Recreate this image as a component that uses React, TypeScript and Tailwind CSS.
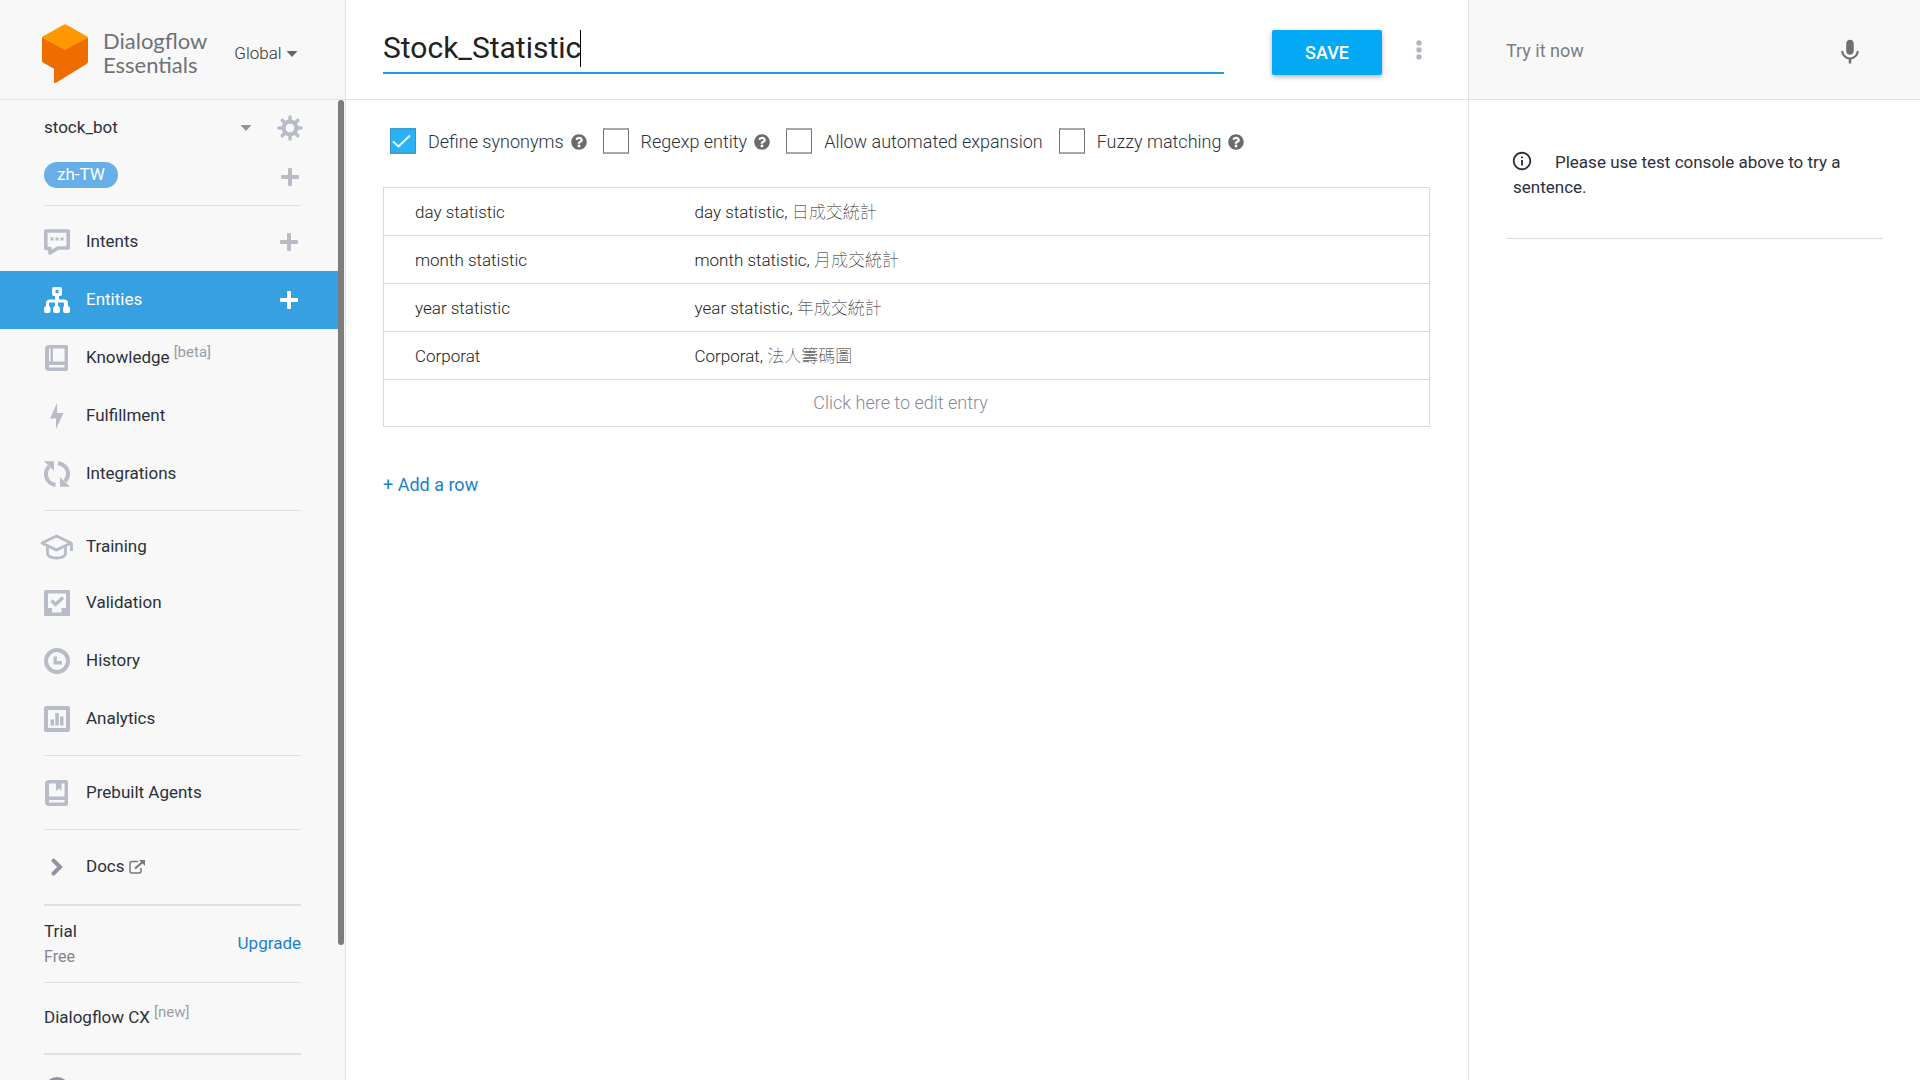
import type { ReactNode } from 'react';
import { FaQuestionCircle } from 'react-icons/fa';
import { MdInfoOutline, MdKeyboardVoice } from 'react-icons/md';

const Logo = () => (
  <svg width="46" height="60" viewBox="0 0 46 60" aria-hidden="true">
    <path d="M23 25.500 0.500 13.500Q0 14 0 15V36.500Q0 38 1.300 38.700L12 44.800V57.500Q12 59.800 14 58.700L44.500 40Q46 39 46 37.500V15Q46 14 45.500 13.500Z" fill="#ef6c00" />
    <path d="M21.600 0.700 0.700 12.600Q-0.300 13.500 0.700 14.100L21.600 25.200Q23 26 24.400 25.200L45.300 14.100Q46.300 13.500 45.300 12.600L24.400 0.700Q23 0 21.600 0.700Z" fill="#ff9800" />
  </svg>
);

const Icon = ({ children, w = 26, h = 26 }: { children: ReactNode; w?: number; h?: number }) => (
  <svg width={w} height={h} viewBox={`0 0 ${w} ${h}`} fill="none" aria-hidden="true">
    {children}
  </svg>
);

const Plus = () => (
  <svg width="18" height="18" viewBox="0 0 18 18" fill="currentColor" aria-hidden="true">
    <rect x="7" y="0" width="4" height="18" rx="1" />
    <rect x="0" y="7" width="18" height="4" rx="1" />
  </svg>
);

const Caret = () => (
  <svg width="12" height="6" viewBox="0 0 12 6" fill="currentColor" aria-hidden="true">
    <path d="M0.500 0h11L6 6Z" />
  </svg>
);

const Gear = () => (
  <svg width="26" height="26" viewBox="0 0 26 26" fill="none" stroke="currentColor" aria-hidden="true">
    <circle cx="13" cy="13" r="6.500" strokeWidth="4" />
    <path
      d="M13 2v5M13 19v5M2 13h5M19 13h5M5.200 5.200l3.500 3.500M17.300 17.300l3.500 3.500M20.800 5.200l-3.500 3.500M8.700 17.300l-3.500 3.500"
      strokeWidth="3.400"
      strokeLinecap="round"
    />
  </svg>
);

const icons = {
  intents: (
    <Icon>
      <path d="M1.800 2H24.200V19H14L6 24V19.500H1.800Z" stroke="currentColor" strokeWidth="3.600" strokeLinejoin="round" />
      <path d="M6.500 8.500h3v3h-3zM11.500 8.500h3v3h-3zM16.500 8.500h3v3h-3z" fill="currentColor" />
    </Icon>
  ),
  entities: (
    <Icon>
      <path
        fillRule="evenodd"
        d="M10 0h6q2 0 2 2v5q0 2-2 2h-1v3.500h5q4 0 4 4V19q2 .5 2 2.500v2.500q0 2-2 2h-3q-2 0-2-2v-2.500q0-2 1-2.500v-2.500q0-1-1-1h-5V19q2 .5 2 2.500v2.500q0 2-2 2h-3q-2 0-2-2v-2.500q0-2 2-2.500v-3.500H6q-1 0-1 1V19q1.500.5 1.500 2.500v2.500q0 2-2 2H2q-2 0-2-2v-2.500q0-2 2-2.500v-2.500q0-4 4-4h5V9h-1Q8 9 8 7V2q0-2 2-2Zm1.500 3v3.200h3V3Z"
        fill="currentColor"
      />
    </Icon>
  ),
  knowledge: (
    <Icon>
      <path fillRule="evenodd" d="M5 0h17q2 0 2 2v22q0 2-2 2H5q-4 0-4-4V4q0-4 4-4Zm0 3.500V16.500h1.500V3.500ZM9 3.500V16.500H20.500V3.500ZM5 20V22.500H20.500V20Z" fill="currentColor" />
    </Icon>
  ),
  fulfillment: (
    <Icon>
      <path d="M13 0 6 15.500h6V26l7.500-16H13Z" fill="currentColor" />
    </Icon>
  ),
  integrations: (
    <Icon>
      <path d="M5 5.500C-.5 11.500 1.500 22 11.500 24M14 2.200C24.500 4 26.500 14 21 20.500" stroke="currentColor" strokeWidth="4" />
      <path d="M0 .3h10v9.400zM26 25.700H16v-9.400z" fill="currentColor" />
    </Icon>
  ),
  training: (
    <Icon w={33}>
      <path d="M2 9 16.500 2 31 9 16.500 16ZM7.500 12V20Q9 24 16.500 24T25.500 20V12M31.500 9V17" stroke="currentColor" strokeWidth="2.800" strokeLinejoin="round" />
    </Icon>
  ),
  validation: (
    <Icon>
      <path fillRule="evenodd" d="M1.500 0h23Q26 0 26 1.500v23Q26 26 24.500 26h-23Q0 26 0 24.500v-23Q0 0 1.500 0ZM4 3.500V18H8V22.500H17.500V18H22V3.500Z" fill="currentColor" />
      <path d="m7.500 10.500 4 4L19 7.500" stroke="currentColor" strokeWidth="3.400" />
    </Icon>
  ),
  history: (
    <Icon>
      <circle cx="13" cy="13" r="11" stroke="currentColor" strokeWidth="4" />
      <path d="M11.200 8.500V14.800H18" stroke="currentColor" strokeWidth="3.400" />
    </Icon>
  ),
  analytics: (
    <Icon>
      <rect x="2" y="2" width="22" height="22" stroke="currentColor" strokeWidth="4" strokeLinejoin="round" />
      <path d="M6.500 13.500h3.500v6H6.500zM11.300 7h3.500v12.500h-3.500zM16 10.500h3.500v9H16z" fill="currentColor" />
    </Icon>
  ),
  prebuilt: (
    <Icon>
      <path fillRule="evenodd" d="M5 0h17q2 0 2 2v22q0 2-2 2H5q-4 0-4-4V4q0-4 4-4Zm0 3.500V16.500H20.500V3.500H17.500V11L15 8.500 12 11V3.500ZM5 20V22.500H20.500V20Z" fill="currentColor" />
    </Icon>
  ),
  docs: (
    <Icon>
      <path d="m9.500 6.500 6.500 6.500-6.500 6.500" stroke="#9094a3" strokeWidth="4" strokeLinecap="round" />
    </Icon>
  ),
};

type Item = { icon: keyof typeof icons; label: string; tag?: string; plus?: boolean; active?: boolean; external?: boolean };

const groups: Item[][] = [
  [
    { icon: 'intents', label: 'Intents', plus: true },
    { icon: 'entities', label: 'Entities', plus: true, active: true },
    { icon: 'knowledge', label: 'Knowledge', tag: '[beta]' },
    { icon: 'fulfillment', label: 'Fulfillment' },
    { icon: 'integrations', label: 'Integrations' },
  ],
  [
    { icon: 'training', label: 'Training' },
    { icon: 'validation', label: 'Validation' },
    { icon: 'history', label: 'History' },
    { icon: 'analytics', label: 'Analytics' },
  ],
  [{ icon: 'prebuilt', label: 'Prebuilt Agents' }],
  [{ icon: 'docs', label: 'Docs', external: true }],
];

const NavItem = ({ item }: { item: Item }) => (
  <li className={`flex items-center pr-[40px] ${item.icon === 'training' ? 'h-[55px]' : 'h-[58px]'} ${item.active ? 'bg-[#36a0e1] text-white' : ''}`}>
    <a href="#" className="flex flex-1 items-center pl-[40px]">
      <span className={`flex w-[33px] justify-center ${item.active ? 'text-white' : 'text-[#b7bcc6]'}`}>{icons[item.icon]}</span>
      <span className="ml-[13px]">{item.label}</span>
      {item.tag && <span className="mb-3 ml-1 text-[15px] text-[#9a9ea8]">{item.tag}</span>}
      {item.external && (
        <svg className="ml-1" width="16" height="14" viewBox="0 0 16 14" fill="none" stroke="#777" aria-hidden="true">
          <path d="M9 1.500H3Q1 1.500 1 3.500V11Q1 13 3 13H10Q12 13 12 11V8" strokeWidth="1.500" />
          <path d="M6 8.500 13 2.500" strokeWidth="2" />
          <path d="M10 0h6v6z" fill="#777" stroke="none" />
        </svg>
      )}
    </a>
    {item.plus && (
      <button type="button" aria-label={`Add to ${item.label}`} className={item.active ? 'text-white' : 'text-[#b7bcc6]'}>
        <Plus />
      </button>
    )}
  </li>
);

const Sidebar = () => (
  <aside className="flex w-[346px] shrink-0 flex-col border-r border-[#e3e3e3] bg-[#f8f8f8]">
    <header className="flex h-[100px] shrink-0 items-center border-b border-[#e3e3e3] pt-2 pl-[42px]">
      <Logo />
      <div className="ml-[15px] pb-0.5 font-[Lato,sans-serif] text-[22px] leading-[24px] text-[#6f7174]">
        <div>Dialogflow</div>
        <div>Essentials</div>
      </div>
      <label className="ml-[27px] flex items-center gap-1 text-[#666]">
        <select aria-label="Region" className="appearance-none font-light text-[#333]">
          <option>Global</option>
        </select>
        <Caret />
      </label>
    </header>
    <div className="relative min-h-0 flex-1 overflow-hidden pr-[7px]">
      <div className="flex h-14 items-center pr-[35px] pl-[44px]">
        <label className="flex flex-1 items-center justify-between text-[#9094a3]">
          <select aria-label="Agent" className="appearance-none text-[#2b303b]">
            <option>stock_bot</option>
          </select>
          <Caret />
        </label>
        <button type="button" aria-label="Agent settings" className="ml-[25px] text-[#b7bcc6]">
          <Gear />
        </button>
      </div>
      <div className="flex h-[49px] items-start justify-between pt-1.5 pr-[39px] pl-[44px]">
        <button type="button" className="h-[26px] rounded-full bg-[#66afe9] px-[13px] text-white">
          zh-TW
        </button>
        <button type="button" aria-label="Add language" className="mt-1.5 text-[#b7bcc6]">
          <Plus />
        </button>
      </div>
      <nav>
        {groups.map((group, i) => (
          <div key={i}>
            <hr className={`mr-[37px] ml-[44px] border-0 border-b border-[#dfe0e2] ${i === 0 ? 'mb-[7px] h-px' : 'mb-2 h-2'}`} />
            <ul>
              {group.map((item) => (
                <NavItem key={item.label} item={item} />
              ))}
            </ul>
          </div>
        ))}
      </nav>
      <div className="mr-[37px] ml-[44px] pt-2">
        <section className="flex h-[78px] items-center justify-between border-t-2 border-[#e0e0e0]">
          <div className="leading-[25px]">
            <div>Trial</div>
            <div className="text-[16px] text-[#82858c]">Free</div>
          </div>
          <a href="#" className="text-[#1c7fd0]">Upgrade</a>
        </section>
        <section className="flex h-[71px] items-center border-t border-[#e0e0e0]">
          <a href="#">Dialogflow CX</a>
          <span className="mb-3 ml-1 text-[15px] text-[#9a9ea8]">[new]</span>
        </section>
        <section className="border-t-2 border-[#e0e0e0] pt-[22px]">
          <a href="#" aria-label="Support" className="block w-[26px] text-[#9094a3]">
            {icons.history}
          </a>
        </section>
      </div>
      <div className="absolute top-0 right-[1px] h-[845px] w-1.5 rounded-full bg-[#7d7d7d]" />
    </div>
  </aside>
);

const options = [
  { label: 'Define synonyms', checked: true, help: true },
  { label: 'Regexp entity', checked: false, help: true },
  { label: 'Allow automated expansion', checked: false, help: false },
  { label: 'Fuzzy matching', checked: false, help: true },
];

const Options = () => (
  <div className="flex items-center gap-4 pl-[7px] text-[18px] font-light">
    {options.map((o) => (
      <div key={o.label} className="flex items-center gap-[7px]">
        <label className="flex items-center gap-3 whitespace-nowrap">
          <span className="relative flex">
            <input
              type="checkbox"
              defaultChecked={o.checked}
              className="peer size-[26px] appearance-none border-x border-y-2 border-x-[#757575] border-y-[#a8a8a8] bg-white checked:border-x-[#3d8fbd] checked:border-y-[#3d9fd3] checked:bg-[#29b2f7]"
            />
            <svg className="pointer-events-none absolute inset-0 hidden peer-checked:block" width="26" height="26" viewBox="0 0 26 26" fill="none" aria-hidden="true">
              <path d="m3 13.500 5.500 5L20 7.500" stroke="#fff" strokeWidth="2" />
            </svg>
          </span>
          <span className="pt-0.5">{o.label}</span>
        </label>
        {o.help && <FaQuestionCircle size={16} className="mt-0.5 text-[#6b6b6b]" />}
      </div>
    ))}
  </div>
);

const rows = [
  { value: 'day statistic', zh: '日成交統計' },
  { value: 'month statistic', zh: '月成交統計' },
  { value: 'year statistic', zh: '年成交統計' },
  { value: 'Corporat', zh: '法人籌碼圖' },
];

const Main = () => (
  <main className="min-w-0 flex-1 bg-white">
    <header className="flex h-[100px] items-start border-b border-[#e3e3e3] pr-[42px] pl-[37px]">
      <div className="relative mt-[22px] flex-1">
        <input
          aria-label="Entity name"
          defaultValue="Stock_Statistic"
          className="h-[52px] w-full border-b-2 border-[#1e9fe0] pt-px text-[30px] text-[#212121] caret-transparent outline-none"
        />
        <span className="absolute top-2 left-[197px] h-[37px] w-px bg-black" />
      </div>
      <button type="button" className="mt-[30px] ml-12 h-[45px] w-[110px] rounded-xs bg-[#03a9f4] text-[18px] font-medium text-white shadow-[0_2px_5px_rgba(0,0,0,0.3)]">
        SAVE
      </button>
      <button type="button" aria-label="More options" className="mt-10 ml-[30px] flex w-[14px] justify-center text-[#b3b6bf]">
        <svg width="6" height="20" viewBox="0 0 6 20" fill="currentColor" aria-hidden="true">
          <circle cx="3" cy="3" r="2.700" />
          <circle cx="3" cy="10" r="2.700" />
          <circle cx="3" cy="17" r="2.700" />
        </svg>
      </button>
    </header>
    <div className="pr-[38px] pl-[37px] pt-[26px]">
      <Options />
      <table className="mt-8 w-full border-collapse text-[17px] font-light">
        <tbody>
          {rows.map(({ value, zh }) => (
            <tr key={value} className="h-12 border border-[#d9dadc]">
              <td className="w-[280px] pt-0.5 pl-[31px] text-[#222]">{value}</td>
              <td className="pt-0.5 pl-[31px] text-[#222]">
                {value}, <span className="font-thin">{zh}</span>
              </td>
            </tr>
          ))}
          <tr className="h-[47px] border border-[#d9dadc]">
            <td colSpan={2} className="pr-3 text-center">
              <button type="button" className="text-[18px] font-light text-[#878a96]">Click here to edit entry</button>
            </td>
          </tr>
        </tbody>
      </table>
      <button type="button" className="mt-11 text-[18px] text-[#1c7fc9]">+ Add a row</button>
    </div>
  </main>
);

const TestConsole = () => (
  <aside className="w-[452px] shrink-0 border-l border-[#e3e3e3] bg-white">
    <header className="flex h-[100px] items-center border-b border-[#e3e3e3] bg-[#f8f8f8] pt-0.5 pr-[55px] pl-[37px]">
      <input aria-label="Try it now" placeholder="Try it now" className="min-w-0 flex-1 text-[18px] text-[#2b303b] outline-none placeholder:text-[#7b7d82]" />
      <button type="button" aria-label="Speak" className="text-[#6f6f6f]">
        <MdKeyboardVoice size={30} />
      </button>
    </header>
    <div className="mr-[37px] ml-[37px] h-[139px] border-b border-[#dcdcdc] pt-[50px] pl-[7px]">
      <p className="leading-[25px]">
        <MdInfoOutline size={22} className="mr-[22px] -ml-0.5 inline-block align-[-4px]" />
        Please use test console above to try a sentence.
      </p>
    </div>
  </aside>
);

export default function App() {
  return (
    <div className="flex h-screen overflow-hidden bg-white font-[Roboto,'Noto_Sans_CJK_TC',sans-serif] text-[17px] text-[#2b303b]">
      <Sidebar />
      <Main />
      <TestConsole />
    </div>
  );
}
